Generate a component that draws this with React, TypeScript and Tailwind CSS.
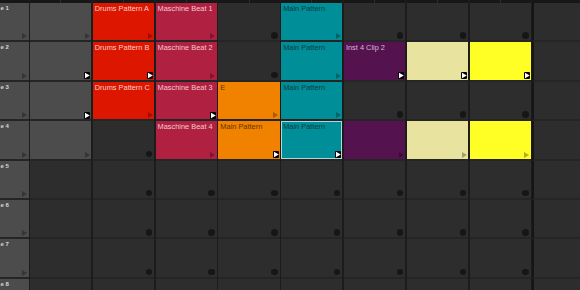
type Icon = "tri" | "play" | "dot" | null;

type Cell = {
  tone: string;
  text?: string;
  icon?: Icon;
  sel?: boolean;
};

// tones written out in full so tailwind picks them up
const tone = {
  gray: "bg-[#4c4c4c]",
  empty: "bg-[#2d2d2d]",
  red: "bg-[#dd1600] text-[#f9cfc6]",
  crimson: "bg-[#b02040] text-[#f3c9d2]",
  orange: "bg-[#f08200] text-[#5e3300]",
  teal: "bg-[#008f98] text-[#0a3c40]",
  purple: "bg-[#54124e] text-[#dcb8da]",
  pale: "bg-[#e8e4a0]",
  yellow: "bg-[#ffff26]",
};

const E: Cell = { tone: tone.empty, icon: "dot" };
const X: Cell = { tone: tone.empty, icon: null };

const rows: Cell[][] = [
  [
    { tone: tone.gray, icon: "tri" },
    { tone: tone.red, text: "Drums Pattern A", icon: "tri" },
    { tone: tone.crimson, text: "Maschine Beat 1", icon: "tri" },
    E,
    { tone: tone.teal, text: "Main Pattern", icon: "tri" },
    E,
    E,
    E,
  ],
  [
    { tone: tone.gray, icon: "play" },
    { tone: tone.red, text: "Drums Pattern B", icon: "play" },
    { tone: tone.crimson, text: "Maschine Beat 2", icon: "tri" },
    E,
    { tone: tone.teal, text: "Main Pattern", icon: "tri" },
    { tone: tone.purple, text: "Inst 4 Clip 2", icon: "play" },
    { tone: tone.pale, icon: "play" },
    { tone: tone.yellow, icon: "play" },
  ],
  [
    { tone: tone.gray, icon: "play" },
    { tone: tone.red, text: "Drums Pattern C", icon: "tri" },
    { tone: tone.crimson, text: "Maschine Beat 3", icon: "play" },
    { tone: tone.orange, text: "E", icon: "tri" },
    { tone: tone.teal, text: "Main Pattern", icon: "tri" },
    E,
    E,
    E,
  ],
  [
    { tone: tone.gray, icon: "tri" },
    E,
    { tone: tone.crimson, text: "Maschine Beat 4", icon: "tri" },
    { tone: tone.orange, text: "Main Pattern", icon: "play" },
    { tone: tone.teal, text: "Main Pattern", icon: "play", sel: true },
    { tone: tone.purple, icon: "tri" },
    { tone: tone.pale, icon: "tri" },
    { tone: tone.yellow, icon: "tri" },
  ],
  [X, E, E, E, E, E, E, E],
  [X, E, E, E, E, E, E, E],
  [X, E, E, E, E, E, E, E],
  [X, E, E, E, E, E, E, E],
];

function Tri() {
  return (
    <svg className="block mt-auto self-end mr-[1.5px] mb-[1px]" width="5" height="6" viewBox="0 0 5 6">
      <polygon points="0,0 5,3 0,6" fill="rgba(0,0,0,0.3)" />
    </svg>
  );
}

function Play() {
  return (
    <span className="block mt-auto self-end mr-[1px] mb-[0.5px] w-[6px] h-[7px] bg-black rounded-[1px]">
      <svg className="block" width="6" height="7" viewBox="0 0 6 7">
        <polygon points="1,0.7 5.8,3.5 1,6.3" fill="#fff" />
      </svg>
    </span>
  );
}

function Dot() {
  return <span className="block mt-auto self-end mr-[2px] mb-[1.5px] w-[6.5px] h-[6.5px] rounded-full bg-[#161616]" />;
}

function ClipCell({ cell }: { cell: Cell }) {
  return (
    <div
      className={`flex flex-col min-w-0 border-b-2 border-[#252525] ${cell.tone} ${
        cell.sel ? "ring-1 ring-inset ring-[#b4d6d6]" : ""
      }`}
    >
      {cell.text && (
        <div className="px-[2px] pt-[1px] text-[7.4px] leading-[10px] whitespace-nowrap overflow-hidden">
          {cell.text}
        </div>
      )}
      {cell.icon === "tri" && <Tri />}
      {cell.icon === "play" && <Play />}
      {cell.icon === "dot" && <Dot />}
    </div>
  );
}

export default function App() {
  return (
    <div className="w-[580px] h-[290px] overflow-hidden bg-[#1c1c1c] font-['Liberation_Sans',Arial,sans-serif]">
      <div className="grid grid-cols-[28.5px_repeat(8,minmax(0,1fr))_47.7px] grid-rows-[3px_repeat(8,39.4px)] gap-x-[1.5px]">
        {/* header strip */}
        <div className="bg-[#171717]" />
        {Array.from({ length: 8 }).map((_, i) => (
          <div key={i} className="bg-[#171717] flex justify-center">
            <div className="w-px h-full bg-[#2c2c2c]" />
          </div>
        ))}
        <div className="bg-[#171717] border-l-2 border-[#151515]" />

        {rows.map((row, r) => (
          <div key={r} className="contents">
            <div className="flex flex-col bg-[#4c4c4c] border-b-2 border-[#252525]">
              <span className="pl-[0.5px] pt-[1px] text-[6px] leading-[8px] font-bold text-[#d6d6d6] whitespace-nowrap">
                e {r + 1}
              </span>
              <Tri />
            </div>
            {row.map((cell, c) => (
              <ClipCell key={c} cell={cell} />
            ))}
            <div className="bg-[#2d2d2d] border-b-2 border-[#252525] border-l-2 border-l-[#151515]" />
          </div>
        ))}
      </div>
    </div>
  );
}
